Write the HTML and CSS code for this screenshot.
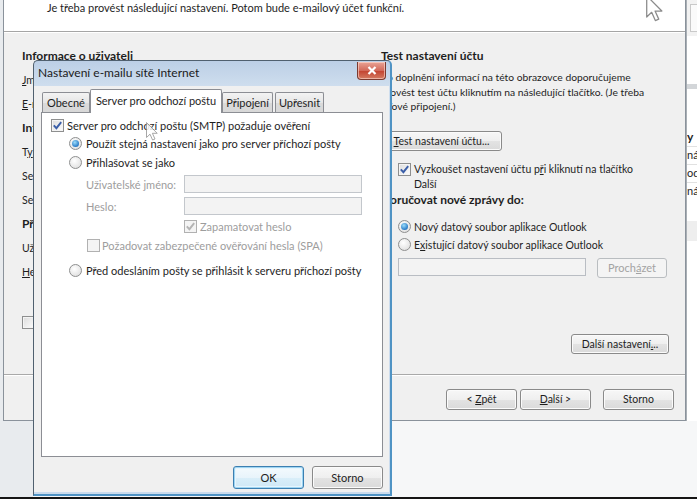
FILE: index.html
```html
<!DOCTYPE html>
<html lang="cs">
<head>
    <meta charset="UTF-8">
    <title>Nastavení e-mailu sítě Internet</title>
    <link rel="stylesheet" href="styles.css">
</head>
<body>
<div class="desktop">

    <!-- window peeking at the right edge -->
    <div class="side-window">
        <div class="side-top"><div class="side-box"></div></div>
        <div class="side-band"></div>
        <div class="side-list">
            <div class="side-head">y</div>
            <div class="side-row">ná</div>
            <div class="side-row">od</div>
            <div class="side-row">ná</div>
        </div>
        <div class="side-strip"></div>
    </div>

    <!-- account wizard in the background -->
    <div class="wizard">
        <div class="wiz-header">
            <p>Je třeba provést následující nastavení. Potom bude e-mailový účet funkční.</p>
        </div>
        <div class="wiz-body">
            <div class="wiz-cols">
                <div class="col-left">
                    <div class="row bold">Informace o uživateli</div>
                    <div class="row"><u>J</u>méno:</div>
                    <div class="row"><u>E</u>-mailová adresa:</div>
                    <div class="row bold">Informace o serveru</div>
                    <div class="row">T<u>y</u>p účtu:</div>
                    <div class="row">Server příchozí pošty:</div>
                    <div class="row">Server odchozí pošty (SMTP):</div>
                    <div class="row bold">Přihlašovací údaje</div>
                    <div class="row">Uživatelské jméno:</div>
                    <div class="row"><u>H</u>eslo:</div>
                    <div class="row row-check"><span class="cb"></span><span>Vyžadovat přihlašování pomocí zabezpečeného ověřování hesla (SPA)</span></div>
                </div>
                <div class="col-right">
                    <div class="heading">Test nastavení účtu</div>
                    <p class="intro">Po doplnění informací na této obrazovce doporučujeme<br>provést test účtu kliknutím na následující tlačítko. (Je třeba<br>síťové připojení.)</p>
                    <button class="btn btn-test"><u>T</u>est nastavení účtu...</button>
                    <div class="check-line">
                        <span class="cb"><svg viewBox="0 0 13 13"><path d="M2.8 6.4 L5.4 9.2 L10.2 3.2" /></svg></span>
                        <span>Vyzkoušet nastavení účtu p<u>ř</u>i kliknutí na tlačítko<br>Další</span>
                    </div>
                    <div class="heading heading-deliver">Doručovat nové zprávy do:</div>
                    <div class="opt opt-first"><span class="rb on"></span><span>Nový datový soubor aplikace Outlook</span></div>
                    <div class="opt"><span class="rb"></span><span>E<u>x</u>istující datový soubor aplikace Outlook</span></div>
                    <div class="file-row">
                        <span class="field"></span>
                        <button class="btn btn-off">Proch<u>á</u>zet</button>
                    </div>
                </div>
            </div>
            <div class="wiz-more">
                <button class="btn btn-more">Další nastavení<u>.</u>..</button>
            </div>
        </div>
        <div class="wiz-footer">
            <button class="btn">&lt; <u>Z</u>pět</button>
            <button class="btn"><u>D</u>alší &gt;</button>
            <button class="btn btn-cancel">Storno</button>
        </div>
    </div>

    <svg class="cursor cursor-top" viewBox="0 0 12 19">
        <path d="M0.5 0.5 L0.5 15.5 L4 12.2 L6.6 18 L9 17 L6.4 11.3 L11.2 11.3 Z" />
    </svg>

    <!-- dialog window -->
    <div class="modal">
        <div class="modal-title">
            <span>Nastavení e-mailu sítě Internet</span>
            <button class="close-btn">
                <svg viewBox="0 0 10 9"><path d="M1.5 1 L8.5 8 M8.5 1 L1.5 8" /></svg>
            </button>
        </div>
        <div class="modal-client">
            <div class="tabs">
                <div class="tab">Obecné</div>
                <div class="tab active">Server pro odchozí poštu</div>
                <div class="tab">Připojení</div>
                <div class="tab">Upřesnit</div>
            </div>
            <div class="tab-panel">
                <div class="line">
                    <span class="cb"><svg viewBox="0 0 13 13"><path d="M2.8 6.4 L5.4 9.2 L10.2 3.2" /></svg></span>
                    <span>Server pro odchozí poštu (SMTP) požaduje ověření</span>
                </div>
                <div class="line indent"><span class="rb on"></span><span>Použít stejná nastavení jako pro server příchozí pošty</span></div>
                <div class="line indent"><span class="rb"></span><span>Přihlašovat se jako</span></div>
                <div class="field-line field-first">
                    <span class="label">Uživatelské jméno:</span>
                    <span class="field field-wide"></span>
                </div>
                <div class="field-line">
                    <span class="label">Heslo:</span>
                    <span class="field field-wide"></span>
                </div>
                <div class="line remember disabled">
                    <span class="cb"><svg viewBox="0 0 13 13"><path d="M2.8 6.4 L5.4 9.2 L10.2 3.2" /></svg></span>
                    <span>Zapamatovat heslo</span>
                </div>
                <div class="line spa disabled"><span class="cb"></span><span>Požadovat zabezpečené ověřování hesla (SPA)</span></div>
                <div class="line indent before"><span class="rb"></span><span>Před odesláním pošty se přihlásit k serveru příchozí pošty</span></div>
            </div>
            <div class="modal-buttons">
                <button class="btn btn-default">OK</button>
                <button class="btn">Storno</button>
            </div>
        </div>
    </div>

    <svg class="cursor cursor-modal" viewBox="0 0 12 19">
        <path d="M0.5 0.5 L0.5 15.5 L4 12.2 L6.6 18 L9 17 L6.4 11.3 L11.2 11.3 Z" />
    </svg>

    <div class="taskbar-edge"></div>
</div>
</body>
</html>
```

FILE: styles.css
```css
body {
    margin: 0;
    font-family: Lato, "Noto Sans", sans-serif;
    color: #1e1e1e;
}
.desktop {
    position: relative;
    width: 697px;
    height: 504px;
    overflow: hidden;
    background: linear-gradient(90deg, #e8ebee 0, #e8ebee 33px, #f6f7f8 33px);
}
button {
    font-family: inherit;
    color: inherit;
}
u {
    text-decoration-thickness: 1px;
    text-underline-offset: 1px;
}

/* ---------- shared win7 controls ---------- */
.btn {
    height: 21px;
    padding: 0 6px;
    border: 1px solid #8a8a8a;
    border-radius: 3px;
    background: linear-gradient(#f7f7f7 0%, #efefef 50%, #e3e3e3 51%, #dadada 100%);
    box-shadow: inset 0 0 0 1px #fbfbfb;
    font-size: 11px;
    line-height: 19px;
}
.btn-off {
    color: #a3a3a3;
    border-color: #b9bdc0;
    background: #f4f4f4;
    box-shadow: none;
}
.cb {
    position: relative;
    display: inline-block;
    flex: none;
    width: 13px;
    height: 13px;
    box-sizing: border-box;
    border: 1px solid #8e8f8f;
    background: linear-gradient(135deg, #dcdcdc, #fdfdfd);
    box-shadow: inset 0 0 0 1px #f4f4f4;
}
.cb svg {
    position: absolute;
    left: -1px;
    top: -1px;
    width: 13px;
    height: 13px;
}
.cb path {
    fill: none;
    stroke: #3a5ea8;
    stroke-width: 1.9;
}
.rb {
    position: relative;
    display: inline-block;
    flex: none;
    width: 13px;
    height: 13px;
    box-sizing: border-box;
    border: 1px solid #8e8f8f;
    border-radius: 50%;
    background: radial-gradient(circle at 40% 35%, #ffffff, #d9d9d9);
}
.rb.on::after {
    content: "";
    position: absolute;
    left: 2px;
    top: 2px;
    width: 7px;
    height: 7px;
    border-radius: 50%;
    background: radial-gradient(circle at 40% 35%, #9bdcfb, #2a7cc7 70%, #1c5a9e);
}
.field {
    display: inline-block;
    box-sizing: border-box;
    border: 1px solid #b9bdc3;
    background-color: #f3f3f3;
}

/* ---------- right edge window ---------- */
.side-window {
    position: absolute;
    left: 686px;
    top: 0;
    width: 11px;
    height: 421px;
    overflow: hidden;
    border-left: 1px solid #a9afb5;
    background-color: #ffffff;
    font-size: 11px;
}
.side-top {
    height: 36px;
    padding: 4px 0 0 3px;
    box-sizing: border-box;
    background-color: #f2f2f2;
}
.side-box {
    height: 26px;
    border: 1px solid #c9c9c9;
    background-color: #fafafa;
}
.side-band {
    height: 5px;
    margin-top: 48px;
    background-color: #d3d6d9;
}
.side-list {
    padding-top: 40px;
}
.side-head {
    font-weight: bold;
    font-size: 12px;
    line-height: 16px;
}
.side-row {
    height: 16px;
    margin-top: 1px;
    line-height: 15px;
    border-top: 1px solid #e1e1e1;
    white-space: nowrap;
}
.side-strip {
    height: 20px;
    margin-top: 22px;
    background-color: #eeeeee;
}

/* ---------- wizard ---------- */
.wizard {
    position: absolute;
    left: 3px;
    top: 0;
    width: 683px;
    height: 421px;
    box-sizing: border-box;
    border: 1px solid #8a929b;
    border-top: none;
    display: flex;
    flex-direction: column;
    background-color: #f0f0f0;
    font-size: 10.5px;
}
.wiz-header {
    height: 33px;
    box-sizing: border-box;
    background-color: #ffffff;
    border-bottom: 1px solid #a5a5a5;
    box-shadow: 0 1px 0 #ffffff;
}
.wiz-header p {
    margin: 0;
    padding: 1px 0 0 43px;
    line-height: 14px;
    font-size: 11px;
}
.wiz-body {
    flex: 1;
    display: flex;
    flex-direction: column;
}
.wiz-cols {
    display: flex;
}
.col-left {
    width: 359px;
    padding: 12px 0 0 18px;
}
.row {
    height: 24px;
    line-height: 24px;
    white-space: nowrap;
}
.bold {
    font-weight: bold;
    font-size: 12px;
}
.row-check {
    display: flex;
    align-items: center;
    gap: 5px;
    margin-top: 26px;
}
.col-right {
    width: 287px;
    padding-top: 17px;
}
.heading {
    font-weight: bold;
    font-size: 12px;
    line-height: 14px;
}
.intro {
    margin: 7px 0 0;
    line-height: 14.5px;
    font-size: 10.3px;
    white-space: nowrap;
}
.btn-test {
    display: block;
    margin-top: 17px;
    width: 121px;
    height: 20px;
    padding: 0;
    font-size: 10.5px;
    line-height: 18px;
}
.check-line {
    display: flex;
    align-items: flex-start;
    gap: 3px;
    margin: 11px 0 0 17px;
    line-height: 15px;
}
.check-line .cb {
    margin-top: 1px;
}
.heading-deliver {
    line-height: 15px;
}
.opt {
    display: flex;
    align-items: center;
    gap: 3px;
    height: 18px;
    margin-left: 17px;
}
.opt-first {
    margin-top: 11px;
}
.file-row {
    display: flex;
    align-items: flex-start;
    gap: 11px;
    margin: 4px 0 0 17px;
}
.file-row .field {
    width: 188px;
    height: 18px;
}
.btn-off {
    width: 70px;
    height: 20px;
    padding: 0;
    line-height: 18px;
}
.wiz-more {
    margin-top: auto;
    padding: 0 16px 20px 0;
    display: flex;
    justify-content: flex-end;
}
.btn-more {
    width: 98px;
    height: 20px;
    padding: 0;
    font-size: 10.5px;
    line-height: 18px;
}
.wiz-footer {
    height: 47px;
    box-sizing: border-box;
    border-top: 1px solid #a9a9a9;
    box-shadow: inset 0 1px 0 #ffffff;
    padding: 14px 11px 0 0;
    display: flex;
    justify-content: flex-end;
    align-items: flex-start;
    gap: 3px;
}
.wiz-footer .btn {
    width: 71px;
    height: 21px;
    padding: 0;
    font-size: 10.5px;
}
.wiz-footer .btn-cancel {
    margin-left: 9px;
}

/* ---------- cursors ---------- */
.cursor {
    position: absolute;
    width: 17px;
    height: 27px;
}
.cursor path {
    fill: #ffffff;
    stroke: #8c8c8c;
    stroke-width: 0.9;
    stroke-linejoin: round;
}
.cursor-top {
    left: 646px;
    top: -5px;
}
.cursor-modal {
    left: 146px;
    top: 122px;
    width: 12px;
    height: 19px;
    opacity: 0.85;
}

/* ---------- dialog ---------- */
.modal {
    position: absolute;
    left: 33px;
    top: 60px;
    width: 359px;
    height: 436px;
    box-sizing: border-box;
    border: 1px solid #50606f;
    border-right: 2px solid #4f93c4;
    border-bottom: 2px solid #4f93c4;
    border-radius: 5px 5px 0 0;
    background: linear-gradient(#bccfe6, #cfdeee 26px, #cadbed);
    display: flex;
    flex-direction: column;
}
.modal-title {
    height: 25px;
    display: flex;
    align-items: center;
    justify-content: space-between;
    padding-left: 4px;
    font-size: 12px;
    color: #1b1b1b;
}
.modal-title span {
    margin-top: -2px;
}
.close-btn {
    align-self: flex-start;
    width: 29px;
    height: 18px;
    margin: 1px 4px 0 0;
    padding: 0;
    border: 1px solid #7b3a30;
    border-top: none;
    border-radius: 0 0 4px 4px;
    background: linear-gradient(#e9a496, #d2695a 50%, #c2412f 51%, #d47b62);
    box-shadow: inset 0 0 0 1px rgba(255, 220, 210, 0.6);
}
.close-btn svg {
    display: block;
    width: 10px;
    height: 9px;
    margin: 0 auto;
}
.close-btn path {
    stroke: #ffffff;
    stroke-width: 2.2;
}
.modal-client {
    flex: 1;
    margin: 0 1px 2px 0;
    padding: 3px 6px 0 7px;
    background-color: #f0f0f0;
    display: flex;
    flex-direction: column;
    font-size: 11px;
}
.tabs {
    display: flex;
    align-items: flex-end;
    height: 23px;
    padding-left: 1px;
    position: relative;
    z-index: 1;
}
.tab {
    height: 20px;
    box-sizing: border-box;
    padding: 0 3px;
    border: 1px solid #8c8e94;
    border-bottom: none;
    background: linear-gradient(#f3f3f3, #e6e6e6 50%, #dadada 51%, #d8d8d8);
    line-height: 19px;
    margin-right: 2px;
    border-radius: 2px 2px 0 0;
}
.tab:first-child {
    padding: 0 4px;
}
.tab.active {
    height: 24px;
    margin: 0 0 -1px -2px;
    padding: 0 5px;
    background: #ffffff;
    line-height: 22px;
}
.tab-panel {
    height: 345px;
    box-sizing: border-box;
    border: 1px solid #8c8e94;
    background-color: #ffffff;
    padding: 3px 0 0 9px;
}
.line {
    display: flex;
    align-items: center;
    gap: 3px;
    height: 18px;
    white-space: nowrap;
}
.indent {
    margin-left: 18px;
    gap: 4px;
}
.indent + .indent {
    margin-top: 1px;
}
.disabled {
    color: #9d9d9d;
}
.disabled .cb {
    border-color: #b1b1b1;
    background: #f4f4f4;
}
.disabled .cb path {
    stroke: #b4b4b4;
}
.field-line {
    display: flex;
    align-items: center;
    height: 22px;
    margin-left: 35px;
    color: #9d9d9d;
}
.field-first {
    margin-top: 2px;
}
.label {
    width: 98px;
}
.field-wide {
    width: 178px;
    height: 18px;
    border-color: #c3c7cc;
}
.remember {
    margin: 0 0 0 133px;
}
.spa {
    margin: 1px 0 0 36px;
    gap: 2px;
}
.before {
    margin-top: 7px;
}
.modal-buttons {
    display: flex;
    justify-content: flex-end;
    gap: 8px;
    padding: 9px 0 0;
}
.modal-buttons .btn {
    width: 71px;
    height: 23px;
    padding: 0;
    font-size: 11px;
}
.btn-default {
    border-color: #3c7fb1;
    background: linear-gradient(#f4fafd, #e8f4fb 50%, #d9eef9 51%, #cfe8f6);
    box-shadow: inset 0 0 0 1px #9fd5f2, inset 0 0 0 2px #e6f5fd;
}

.taskbar-edge {
    position: absolute;
    left: 0;
    top: 497px;
    width: 697px;
    height: 7px;
    border-top: 2px solid #151515;
    box-sizing: border-box;
    background-color: #ffffff;
}
```
